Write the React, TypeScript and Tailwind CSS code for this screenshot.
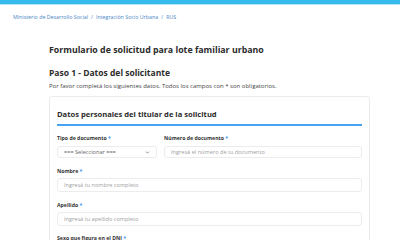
import { ChevronDown } from 'lucide-react'

function Label({ text }: { text: string }) {
    return (
        <label className="block text-[5.2px] leading-[8px] font-bold text-[#333]">
            {text} <span className="text-[#3e9cf2]">*</span>
        </label>
    )
}

function Input({ placeholder }: { placeholder: string }) {
    return (
        <div className="h-[14px] flex items-center px-[6px] border border-[#ececec] rounded-[3px] text-[5.6px] text-[#a0a0a0]">
            {placeholder}
        </div>
    )
}

export default function App() {
    return (
        <div className="w-[400px] h-[240px] overflow-hidden bg-white font-['Open_Sans',sans-serif]">
            <div className="h-[4px] bg-[#37bbed]" />
            <div className="h-[1px] bg-[#b4e5f8]" />
            <nav className="px-[13px] pt-[8px] text-[5.3px] leading-[8px] text-[#4a86c5] flex gap-[3px]">
                <span>Ministerio de Desarrollo Social</span>
                <span>/</span>
                <span>Integración Socio Urbana</span>
                <span>/</span>
                <span>RUS</span>
            </nav>
            <main className="ml-[49px] w-[321px]">
                <h1 className="mt-[23px] text-[8.8px] leading-[12px] font-bold text-[#2b2b2b]">
                    Formulario de solicitud para lote familiar urbano
                </h1>
                <h2 className="mt-[12px] text-[8.5px] leading-[10px] font-bold text-[#2b2b2b]">
                    Paso 1 - Datos del solicitante
                </h2>
                <p className="mt-[4px] text-[6px] leading-[8px] text-[#444]">
                    Por favor completá los siguientes datos. Todos los campos con * son obligatorios.
                </p>
                <section className="mt-[6px] border border-[#ebebeb] rounded-[3px] px-[7px] pt-[12px] h-[200px]">
                    <h3 className="text-[7.6px] leading-[10px] font-bold text-[#2b2b2b]">
                        Datos personales del titular de la solicitud
                    </h3>
                    <div className="mt-[5px] h-[2px] bg-[#4aa3f2]" />
                    <div className="mt-[8px] flex gap-[7px]">
                        <div className="w-[100px] flex flex-col gap-[4px]">
                            <Label text="Tipo de documento" />
                            <div className="h-[12px] flex items-center justify-between px-[6px] border border-[#ececec] rounded-[3px] text-[5.6px] text-[#666]">
                                <span>=== Seleccionar ===</span>
                                <ChevronDown className="w-[5px] h-[5px] text-[#555]" strokeWidth={3} />
                            </div>
                        </div>
                        <div className="flex-1 flex flex-col gap-[4px]">
                            <Label text="Número de documento" />
                            <div className="h-[12px] flex items-center px-[6px] border border-[#ececec] rounded-[3px] text-[5.6px] text-[#a0a0a0]">
                                Ingresá el número de tu documento
                            </div>
                        </div>
                    </div>
                    <div className="mt-[9px] flex flex-col gap-[3px]">
                        <Label text="Nombre" />
                        <Input placeholder="Ingresá tu nombre completo" />
                    </div>
                    <div className="mt-[9px] flex flex-col gap-[3px]">
                        <Label text="Apellido" />
                        <Input placeholder="Ingresá tu apellido completo" />
                    </div>
                    <div className="mt-[8px]">
                        <Label text="Sexo que figura en el DNI" />
                    </div>
                </section>
            </main>
        </div>
    )
}
